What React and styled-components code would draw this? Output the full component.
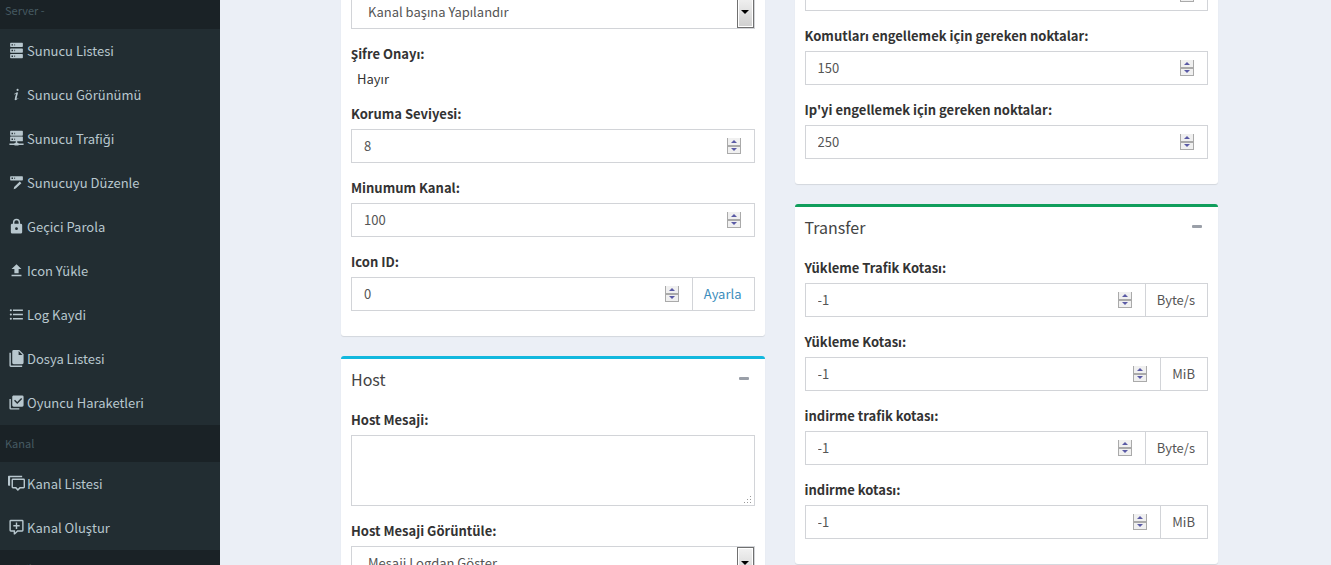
import React, { useState } from "react";
import styled, { createGlobalStyle } from "styled-components";

const ICONS = {
  server:
    "M4,1H20A1,1 0 0,1 21,2V6A1,1 0 0,1 20,7H4A1,1 0 0,1 3,6V2A1,1 0 0,1 4,1M4,9H20A1,1 0 0,1 21,10V14A1,1 0 0,1 20,15H4A1,1 0 0,1 3,14V10A1,1 0 0,1 4,9M4,17H20A1,1 0 0,1 21,18V22A1,1 0 0,1 20,23H4A1,1 0 0,1 3,22V18A1,1 0 0,1 4,17M9,5H10V3H9V5M9,13H10V11H9V13M9,21H10V19H9V21M5,3V5H7V3H5M5,11V13H7V11H5M5,19V21H7V19H5Z",
  info:
    "M13.5,4A1.5,1.5 0 0,0 12,5.5A1.5,1.5 0 0,0 13.5,7A1.5,1.5 0 0,0 15,5.5A1.5,1.5 0 0,0 13.5,4M13.14,8.77C11.95,8.87 8.7,11.46 8.7,11.46C8.5,11.61 8.56,11.6 8.72,11.88C8.88,12.15 8.86,12.17 9.05,12.04C9.25,11.91 9.58,11.7 10.13,11.36C12.25,10 10.47,13.14 9.56,18.43C9.2,21.05 11.56,19.7 12.17,19.3C12.77,18.91 14.38,17.8 14.54,17.69C14.76,17.54 14.6,17.42 14.43,17.17C14.31,17 14.19,17.12 14.19,17.12C13.54,17.55 12.35,18.45 12.19,17.88C12,17.31 13.22,13.4 13.89,10.71C14,10.07 14.3,8.67 13.14,8.77Z",
  network:
    "M13,18H14A1,1 0 0,1 15,19H22V21H15A1,1 0 0,1 14,22H10A1,1 0 0,1 9,21H2V19H9A1,1 0 0,1 10,18H11V16H4A1,1 0 0,1 3,15V10A1,1 0 0,1 4,9H20A1,1 0 0,1 21,10V15A1,1 0 0,1 20,16H13V18M4,1H20A1,1 0 0,1 21,2V7A1,1 0 0,1 20,8H4A1,1 0 0,1 3,7V2A1,1 0 0,1 4,1M9,6H10V4H9V6M9,14H10V12H9V14M5,4V6H7V4H5M5,12V14H7V12H5Z",
  edit:
    "M4,3H20A1,1 0 0,1 21,4V8A1,1 0 0,1 20,9H4A1,1 0 0,1 3,8V4A1,1 0 0,1 4,3M9,7H10V5H9V7M5,5V7H7V5H5M16.6,10.6L18.9,12.9L10.9,20.6L8,21.4L8.7,18.4Z",
  lock:
    "M12,17A2,2 0 0,0 14,15C14,13.89 13.1,13 12,13A2,2 0 0,0 10,15A2,2 0 0,0 12,17M18,8A2,2 0 0,1 20,10V20A2,2 0 0,1 18,22H6A2,2 0 0,1 4,20V10C4,8.89 4.9,8 6,8H7V6A5,5 0 0,1 12,1A5,5 0 0,1 17,6V8H18M12,3A3,3 0 0,0 9,6V8H15V6A3,3 0 0,0 12,3Z",
  upload: "M9,16V10H5L12,3L19,10H15V16H9M5,20V18H19V20H5Z",
  list:
    "M7,5H21V7H7V5M7,13V11H21V13H7M4,4.5A1.5,1.5 0 0,1 5.5,6A1.5,1.5 0 0,1 4,7.5A1.5,1.5 0 0,1 2.5,6A1.5,1.5 0 0,1 4,4.5M4,10.5A1.5,1.5 0 0,1 5.5,12A1.5,1.5 0 0,1 4,13.5A1.5,1.5 0 0,1 2.5,12A1.5,1.5 0 0,1 4,10.5M7,19V17H21V19H7M4,16.5A1.5,1.5 0 0,1 5.5,18A1.5,1.5 0 0,1 4,19.5A1.5,1.5 0 0,1 2.5,18A1.5,1.5 0 0,1 4,16.5Z",
  files:
    "M15,7H20.5L15,1.5V7M8,0H16L22,6V18A2,2 0 0,1 20,20H8C6.89,20 6,19.1 6,18V2A2,2 0 0,1 8,0M4,4V22H20V24H4A2,2 0 0,1 2,22V4H4Z",
  checks:
    "M22,16A2,2 0 0,1 20,18H8C6.89,18 6,17.1 6,16V4C6,2.89 6.89,2 8,2H20A2,2 0 0,1 22,4V16M16,20V22H4A2,2 0 0,1 2,20V7H4V20H16M13,14L20,7L18.59,5.59L13,11.17L9.91,8.09L8.5,9.5L13,14Z",
  channels:
    "M1,1H20V3H3V15H1A1,1 0 0,1 0,14V2A1,1 0 0,1 1,1M7,5H22A2,2 0 0,1 24,7V17A2,2 0 0,1 22,19H17.5L14,22.5L10.5,19H7A2,2 0 0,1 5,17V7A2,2 0 0,1 7,5M7,7V17H11.5L14,19.5L16.5,17H22V7H7Z",
  add:
    "M4,1H20A2,2 0 0,1 22,3V16A2,2 0 0,1 20,18H13.9L10.2,21.7C10,21.9 9.75,22 9.5,22H9A1,1 0 0,1 8,21V18H4A2,2 0 0,1 2,16V3A2,2 0 0,1 4,1M4,3V16H10V19.1L13.1,16H20V3H4M11,5H13V8.5H16.5V10.5H13V14H11V10.5H7.5V8.5H11V5Z",
};

const serverLinks = [
  { icon: "server", text: "Sunucu Listesi" },
  { icon: "info", text: "Sunucu Görünümü" },
  { icon: "network", text: "Sunucu Trafiği" },
  { icon: "edit", text: "Sunucuyu Düzenle" },
  { icon: "lock", text: "Geçici Parola" },
  { icon: "upload", text: "Icon Yükle" },
  { icon: "list", text: "Log Kaydi" },
  { icon: "files", text: "Dosya Listesi" },
  { icon: "checks", text: "Oyuncu Haraketleri" },
];

const channelLinks = [
  { icon: "channels", text: "Kanal Listesi" },
  { icon: "add", text: "Kanal Oluştur" },
];

const MenuLinks = ({ links }) => (
  <MenuList>
    {links.map(({ icon, text }) => (
      <li key={text}>
        <MenuLink href="#">
          <MenuIcon viewBox="0 0 24 24" aria-hidden="true">
            <path d={ICONS[icon]} />
          </MenuIcon>
          <span>{text}</span>
        </MenuLink>
      </li>
    ))}
  </MenuList>
);

const NumberField = ({ id, label, value, children }) => {
  const [amount, setAmount] = useState(value);

  return (
    <FormGroup>
      {label && <Label htmlFor={id}>{label}</Label>}
      <InputGroup>
        <NumberFrame>
          <NumberInput
            id={id}
            type="number"
            aria-label={label ? undefined : id}
            value={amount}
            onChange={(e) => setAmount(e.target.value)}
          />
          <Spinner>
            <SpinButton
              type="button"
              aria-label="+"
              tabIndex={-1}
              onClick={() => setAmount(Number(amount) + 1)}
            >
              <svg width="6" height="3" viewBox="0 0 6 3">
                <path d="M3 0L6 3H0Z" />
              </svg>
            </SpinButton>
            <SpinButton
              type="button"
              aria-label="-"
              tabIndex={-1}
              onClick={() => setAmount(Number(amount) - 1)}
            >
              <svg width="6" height="3" viewBox="0 0 6 3">
                <path d="M0 0H6L3 3Z" />
              </svg>
            </SpinButton>
          </Spinner>
        </NumberFrame>
        {children}
      </InputGroup>
    </FormGroup>
  );
};

const SelectField = ({ id, label, option }) => (
  <FormGroup>
    {label && <Label htmlFor={id}>{label}</Label>}
    <SelectWrap>
      <Select id={id} aria-label={label ? undefined : id}>
        <option>{option}</option>
      </Select>
      <SelectArrow aria-hidden="true">
        <svg width="8" height="4" viewBox="0 0 8 4">
          <path d="M0 0H8L4 4Z" />
        </svg>
      </SelectArrow>
    </SelectWrap>
  </FormGroup>
);

const BoxTitle = ({ children }) => (
  <BoxHeader>
    <h3>{children}</h3>
    <CollapseButton type="button" aria-label={children}>
      <svg width="10" height="3" viewBox="0 0 10 3">
        <rect width="10" height="3" rx="1" />
      </svg>
    </CollapseButton>
  </BoxHeader>
);

const App = () => {
  return (
    <Page>
      <GlobalStyle />
      <Sidebar>
        <MenuHeader>Server -</MenuHeader>
        <MenuLinks links={serverLinks} />
        <MenuHeader>Kanal</MenuHeader>
        <MenuLinks links={channelLinks} />
        <MenuHeader>Müzik</MenuHeader>
      </Sidebar>
      <Content>
        <Column $scrolled={18}>
          <Box>
            <BoxBody>
              <SelectField id="kanal" option="Kanal başına Yapılandır" />
              <FormGroup>
                <Label as="div">Şifre Onayı:</Label>
                <StaticText>Hayır</StaticText>
              </FormGroup>
              <NumberField id="koruma" label="Koruma Seviyesi:" value="8" />
              <NumberField id="minumum" label="Minumum Kanal:" value="100" />
              <NumberField id="icon-id" label="Icon ID:" value="0">
                <Addon>
                  <a href="#">Ayarla</a>
                </Addon>
              </NumberField>
            </BoxBody>
          </Box>
          <Box $accent="#12b8de">
            <BoxTitle>Host</BoxTitle>
            <BoxBody>
              <FormGroup>
                <Label htmlFor="host-mesaji">Host Mesaji:</Label>
                <TextAreaWrap>
                  <TextArea id="host-mesaji" />
                  <Grip viewBox="0 0 8 8" aria-hidden="true">
                    <path d="M6 0h1v1H6zM3 3h1v1H3zM6 3h1v1H6zM0 6h1v1H0zM3 6h1v1H3zM6 6h1v1H6z" />
                  </Grip>
                </TextAreaWrap>
              </FormGroup>
              <SelectField
                id="host-goruntule"
                label="Host Mesaji Görüntüle:"
                option="Mesaji Logdan Göster"
              />
            </BoxBody>
          </Box>
        </Column>
        <Column $scrolled={36}>
          <Box>
            <BoxBody>
              <NumberField id="azalt" value="" />
              <NumberField
                id="komut"
                label="Komutları engellemek için gereken noktalar:"
                value="150"
              />
              <NumberField
                id="ip"
                label="Ip'yi engellemek için gereken noktalar:"
                value="250"
              />
            </BoxBody>
          </Box>
          <Box $accent="#109e5c">
            <BoxTitle>Transfer</BoxTitle>
            <BoxBody>
              <NumberField id="yt" label="Yükleme Trafik Kotası:" value="-1">
                <Addon>Byte/s</Addon>
              </NumberField>
              <NumberField id="yk" label="Yükleme Kotası:" value="-1">
                <Addon>MiB</Addon>
              </NumberField>
              <NumberField id="it" label="indirme trafik kotası:" value="-1">
                <Addon>Byte/s</Addon>
              </NumberField>
              <NumberField id="ik" label="indirme kotası:" value="-1">
                <Addon>MiB</Addon>
              </NumberField>
            </BoxBody>
          </Box>
        </Column>
      </Content>
    </Page>
  );
};

const GlobalStyle = createGlobalStyle`
  * {
    box-sizing: border-box;
  }
  body {
    margin: 0;
    font-family: "Noto Sans CJK SC", "Noto Sans", sans-serif;
    font-size: 13px;
    line-height: 20px;
    color: #333;
    background: #ebeff6;
  }
  input, select, textarea, button {
    font: inherit;
  }
  a {
    color: #3c8dbc;
    text-decoration: none;
  }
`;

const Page = styled.div`
  display: flex;
  height: 100vh;
  overflow: hidden;
`;

const Sidebar = styled.nav`
  flex: 0 0 220px;
  margin-top: -8px;
  background: #222d32;
`;

const MenuHeader = styled.div`
  height: 37px;
  padding: 10px 5px;
  font-size: 11px;
  line-height: 17px;
  color: #465a62;
  background: #1a2226;
`;

const MenuList = styled.ul`
  margin: 0;
  padding: 0;
  list-style: none;
`;

const MenuLink = styled.a`
  display: flex;
  align-items: center;
  gap: 2px;
  height: 44px;
  padding: 0 8px;
  color: #b8c7ce;
`;

const MenuIcon = styled.svg`
  width: 17px;
  height: 17px;
  margin-bottom: 1px;
  fill: currentColor;
`;

const Content = styled.main`
  flex: 1;
  display: grid;
  grid-template-columns: 1fr 1fr;
  gap: 30px;
  padding: 0 113px 0 121px;
`;

const Column = styled.div`
  margin-top: -${(props) => props.$scrolled}px;
  min-width: 0;
`;

const Box = styled.section`
  margin-bottom: 20px;
  background: #fff;
  border-top: 3px solid ${(props) => props.$accent || "#d2d6de"};
  border-radius: 3px;
  box-shadow: 0 1px 1px rgba(0, 0, 0, 0.1);
`;

const BoxHeader = styled.header`
  display: flex;
  align-items: center;
  justify-content: space-between;
  height: 41px;
  padding: 0 11px 2px 10px;
  color: #444;
  h3 {
    margin: 0;
    font-size: 16px;
    font-weight: 400;
  }
`;

const CollapseButton = styled.button`
  display: flex;
  padding: 5px;
  border: 0;
  background: transparent;
  fill: #9a9fa8;
  cursor: pointer;
`;

const BoxBody = styled.div`
  padding: 10px;
`;

const FormGroup = styled.div`
  margin-bottom: 15px;
`;

const Label = styled.label`
  display: block;
  margin-bottom: 5px;
  font-weight: 700;
`;

const StaticText = styled.div`
  padding-left: 6px;
`;

const InputGroup = styled.div`
  display: flex;
  height: 34px;
`;

const NumberFrame = styled.div`
  flex: 1;
  display: flex;
  align-items: center;
  min-width: 0;
  padding: 0 13px 0 12px;
  border: 1px solid #d2d4d8;
`;

const NumberInput = styled.input`
  flex: 1;
  min-width: 0;
  height: 20px;
  padding: 0;
  border: 0;
  outline: 0;
  color: #555;
  background: transparent;
  appearance: textfield;
  &::-webkit-inner-spin-button {
    display: none;
  }
`;

const Spinner = styled.div`
  display: flex;
  flex-direction: column;
  width: 14px;
  height: 16px;
`;

const SpinButton = styled.button`
  flex: 1;
  display: flex;
  align-items: center;
  justify-content: center;
  padding: 0;
  border: 1px solid #aaa;
  border-top-width: 0;
  background: #f0f0f0;
  fill: #5a5aa5;
  & + & {
    border-top-width: 1px;
  }
`;

const Addon = styled.span`
  padding: 6px 12px 6px 11px;
  border: 1px solid #d2d4d8;
  border-left: 0;
  color: #555;
`;

const SelectWrap = styled.div`
  position: relative;
`;

const Select = styled.select`
  display: block;
  width: 100%;
  height: 34px;
  padding: 6px 16px;
  border: 1px solid #d2d4d8;
  border-radius: 0;
  color: #555;
  background: #fff;
  appearance: none;
`;

const SelectArrow = styled.span`
  position: absolute;
  top: 1px;
  right: 1px;
  bottom: 1px;
  width: 17px;
  display: flex;
  align-items: center;
  justify-content: center;
  border: 1px solid #707070;
  background: linear-gradient(#f2f2f2, #cfcfcf);
  box-shadow: inset 0 0 0 1px #fff;
  pointer-events: none;
`;

const TextAreaWrap = styled.div`
  position: relative;
`;

const TextArea = styled.textarea`
  display: block;
  width: 100%;
  height: 71px;
  padding: 6px 12px;
  border: 1px solid #d2d4d8;
  color: #555;
  resize: none;
`;

const Grip = styled.svg`
  position: absolute;
  right: 3px;
  bottom: 2px;
  width: 8px;
  height: 8px;
  fill: #999;
  pointer-events: none;
`;

export default App;
